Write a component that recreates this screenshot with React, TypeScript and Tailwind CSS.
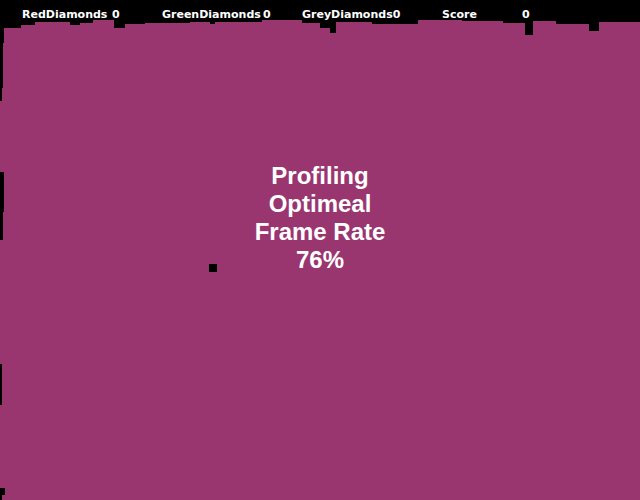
import React from "react";

// Jagged top/left outline of the playfield, as drawn by the game canvas.
const FIELD_POINTS = [
  [4, 28], [21, 28], [21, 25], [35, 25], [35, 22], [70, 22], [70, 25], [80, 25], [80, 23],
  [93, 23], [93, 20], [114, 20], [114, 28], [125, 28], [125, 24], [145, 24], [145, 23],
  [190, 23], [190, 22], [210, 22], [210, 24], [215, 24], [215, 22], [262, 22], [262, 20],
  [302, 20], [302, 23], [320, 23], [320, 28], [330, 28], [330, 33], [336, 33], [336, 22],
  [372, 22], [372, 24], [418, 24], [418, 20], [462, 20], [462, 21], [503, 21], [503, 23],
  [525, 23], [525, 35], [533, 35], [533, 21], [556, 21], [556, 24], [589, 24], [589, 31],
  [599, 31], [599, 22], [640, 22], [640, 500],
  [2, 500], [2, 495], [5, 495], [5, 488], [0, 488],
  [0, 405], [2, 405], [2, 364], [0, 364],
  [0, 240], [3, 240], [3, 212], [4, 212], [4, 172], [0, 172],
  [0, 101], [2, 101], [2, 88], [3, 88], [3, 43], [4, 43],
]
  .map(([x, y]) => `${x},${y}`)
  .join(" ");

const hud = [
  { text: "RedDiamonds", left: "left-[22px]" },
  { text: "0", left: "left-[112px]" },
  { text: "GreenDiamonds", left: "left-[162px]" },
  { text: "0", left: "left-[263px]" },
  { text: "GreyDiamonds0", left: "left-[302px]" },
  { text: "Score", left: "left-[442px]" },
  { text: "0", left: "left-[522px]" },
];

export default function App() {
  return (
    <div className="relative w-[640px] h-[500px] overflow-hidden bg-black">
      <svg
        className="absolute inset-0"
        width={640}
        height={500}
        viewBox="0 0 640 500"
        shapeRendering="crispEdges"
      >
        <polygon points={FIELD_POINTS} fill="#993670" />
        <rect x={209} y={264} width={8} height={8} fill="#000000" />
      </svg>

      {hud.map((h, i) => (
        <span
          key={i}
          className={`absolute top-[9px] ${h.left} text-[11px] leading-[11px] font-bold text-white whitespace-pre`}
          style={{ fontFamily: '"DejaVu Sans", sans-serif' }}
        >
          {h.text}
        </span>
      ))}

      <div className="absolute inset-x-0 top-[162px] flex flex-col items-center text-white font-bold text-[24px] leading-[28px] font-['Liberation_Sans',Arial,sans-serif]">
        <span>Profiling</span>
        <span>Optimeal</span>
        <span>Frame Rate</span>
        <span>76%</span>
      </div>
    </div>
  );
}
